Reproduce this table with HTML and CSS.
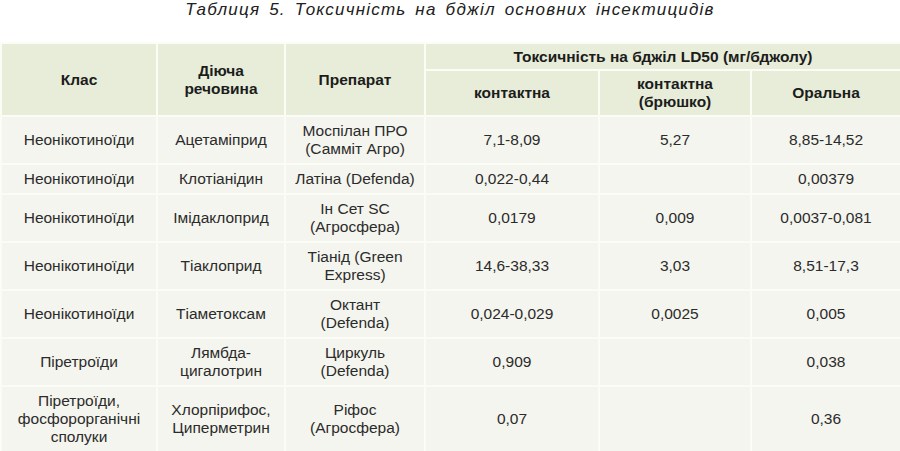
FILE: index.html
```html
<!DOCTYPE html>
<html lang="uk">
<head>
<meta charset="utf-8">
<title>Таблиця 5</title>
<link rel="stylesheet" href="styles.css">
</head>
<body>
<div class="page">
  <p class="caption">Таблиця 5. Токсичність на бджіл основних інсектицидів</p>
  <table class="tox">
    <colgroup>
      <col class="c1"><col class="c2"><col class="c3"><col class="c4"><col class="c5"><col class="c6">
    </colgroup>
    <thead>
      <tr class="h1">
        <th rowspan="2">Клас</th>
        <th rowspan="2">Діюча<br>речовина</th>
        <th rowspan="2">Препарат</th>
        <th colspan="3">Токсичність на бджіл LD50 (мг/бджолу)</th>
      </tr>
      <tr class="h2">
        <th>контактна</th>
        <th>контактна<br>(брюшко)</th>
        <th>Оральна</th>
      </tr>
    </thead>
    <tbody>
      <tr>
        <td>Неонікотиноїди</td><td>Ацетаміприд</td><td>Моспілан ПРО<br>(Самміт Агро)</td>
        <td>7,1-8,09</td><td>5,27</td><td>8,85-14,52</td>
      </tr>
      <tr>
        <td>Неонікотиноїди</td><td>Клотіанідин</td><td>Латіна (Defenda)</td>
        <td>0,022-0,44</td><td></td><td>0,00379</td>
      </tr>
      <tr>
        <td>Неонікотиноїди</td><td>Імідаклоприд</td><td>Ін Сет SC<br>(Агросфера)</td>
        <td>0,0179</td><td>0,009</td><td>0,0037-0,081</td>
      </tr>
      <tr>
        <td>Неонікотиноїди</td><td>Тіаклоприд</td><td>Тіанід (Green<br>Express)</td>
        <td>14,6-38,33</td><td>3,03</td><td>8,51-17,3</td>
      </tr>
      <tr>
        <td>Неонікотиноїди</td><td>Тіаметоксам</td><td>Октант<br>(Defenda)</td>
        <td>0,024-0,029</td><td>0,0025</td><td>0,005</td>
      </tr>
      <tr>
        <td>Піретроїди</td><td>Лямбда-<br>цигалотрин</td><td>Циркуль<br>(Defenda)</td>
        <td>0,909</td><td></td><td>0,038</td>
      </tr>
      <tr>
        <td>Піретроїди,<br>фосфорорганічні<br>сполуки</td><td>Хлорпірифос,<br>Циперметрин</td><td>Ріфос<br>(Агросфера)</td>
        <td>0,07</td><td></td><td>0,36</td>
      </tr>
    </tbody>
  </table>
</div>
</body>
</html>
```

FILE: styles.css
```css
html, body {
  margin: 0;
  padding: 0;
  background: #ffffff;
}

.page {
  width: 900px;
  font-family: "Liberation Sans", Arial, sans-serif;
}

.caption {
  margin: 0;
  height: 42px;
  text-align: center;
  font-style: italic;
  font-size: 17px;
  line-height: 20px;
  letter-spacing: 1.2px;
  word-spacing: 3px;
  color: #202020;
}

.tox {
  width: 900px;
  border-collapse: collapse;
  table-layout: fixed;
  border: 2px solid #fbfcf6;
}

.c1 { width: 156px; }
.c2 { width: 128px; }
.c3 { width: 140px; }
.c4 { width: 174px; }
.c5 { width: 152px; }
.c6 { width: 150px; }

.tox th,
.tox td {
  border: 2px solid #fbfcf6;
  text-align: center;
  vertical-align: middle;
}

.tox th {
  padding: 4px 4px;
  background: #e7edd8;
  font-weight: bold;
  font-size: 15.5px;
  line-height: 18px;
  color: #1c1c1c;
}

.tox td {
  padding: 5px 4px;
  background: #f4f5ee;
  font-size: 15.5px;
  line-height: 18px;
  color: #2b2b2b;
}

.tox .h1 th[colspan] {
  padding: 4px 4px 3px;
}
```
